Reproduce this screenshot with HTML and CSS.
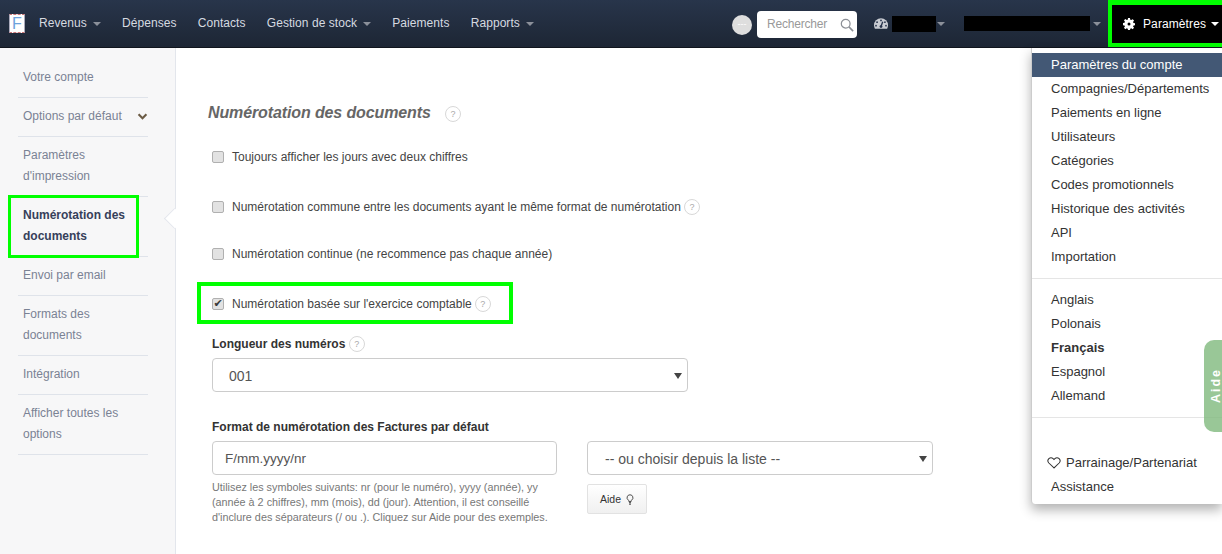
FILE: index.html
```html
<!DOCTYPE html>
<html lang="fr">
<head>
<meta charset="utf-8">
<title>Numérotation des documents</title>
<link rel="stylesheet" href="styles.css">
</head>
<body>
<header class="nav">
  <div class="logo"><span>F</span></div>
  <nav class="nav-main">
    <a class="nav-link has-caret">Revenus</a>
    <a class="nav-link">Dépenses</a>
    <a class="nav-link">Contacts</a>
    <a class="nav-link has-caret">Gestion de stock</a>
    <a class="nav-link">Paiements</a>
    <a class="nav-link has-caret">Rapports</a>
  </nav>
  <div class="nav-right">
    <div class="avatar">---</div>
    <div class="search">
      <span>Rechercher</span>
      <svg viewBox="0 0 16 16" width="14" height="14"><circle cx="6.5" cy="6.5" r="5" fill="none" stroke="#8b8f96" stroke-width="1.4"/><path d="M10.2 10.2 15 15" stroke="#8b8f96" stroke-width="1.8"/></svg>
    </div>
    <div class="dash">
      <svg viewBox="0 0 16 12" width="14" height="11"><path d="M8 0a8 8 0 0 0-8 8c0 1.500.4 2.800 1 4h14c.6-1.200 1-2.500 1-4a8 8 0 0 0-8-8z" fill="#c9ccd2"/><circle cx="8" cy="2.500" r="1" fill="#27334a"/><circle cx="3.500" cy="4.500" r="1" fill="#27334a"/><circle cx="12.500" cy="4.500" r="1" fill="#27334a"/><circle cx="2.300" cy="8.500" r="1" fill="#27334a"/><circle cx="13.700" cy="8.500" r="1" fill="#27334a"/><path d="M8 9.500 10 4" stroke="#27334a" stroke-width="1.500"/><circle cx="8" cy="9.500" r="1.600" fill="#27334a"/></svg>
      <span class="redact redact-a"></span>
      <i class="caret"></i>
    </div>
    <div class="account">
      <span class="redact redact-b"></span>
      <i class="caret"></i>
    </div>
    <div class="settings">
      <svg viewBox="0 0 16 16" width="12" height="12"><path fill="#fff" fill-rule="evenodd" d="M6.700 0h2.600l.4 2.200 1.300.6 1.900-1.300 1.800 1.800-1.300 1.900.6 1.300 2 .4v2.600l-2 .4-.6 1.300 1.300 1.900-1.800 1.800-1.900-1.300-1.300.6-.4 2H6.700l-.4-2-1.300-.6-1.900 1.300-1.800-1.800 1.300-1.900-.6-1.300-2-.4V6.700l2-.4.6-1.300-1.300-1.900 1.800-1.800L5 2.800l1.300-.6zM8 6a2 2 0 1 0 0 4 2 2 0 0 0 0-4z"/></svg>
      <span>Paramètres</span>
      <i class="caret caret-white"></i>
    </div>
  </div>
</header>

<div class="page">
  <aside class="side">
    <ul class="side-list">
      <li class="side-item">Votre compte</li>
      <li class="side-item side-toggle">Options par défaut
        <svg viewBox="0 0 12 8" width="11" height="7"><path d="M1.500 1.500 6 6l4.500-4.500" fill="none" stroke="#6b5b45" stroke-width="2.400"/></svg>
      </li>
      <li class="side-item">Paramètres d'impression</li>
      <li class="side-item side-active">Numérotation des documents</li>
      <li class="side-item">Envoi par email</li>
      <li class="side-item">Formats des documents</li>
      <li class="side-item">Intégration</li>
      <li class="side-item">Afficher toutes les options</li>
    </ul>
  </aside>

  <main class="content">
    <h2 class="title">Numérotation des documents <span class="hint hint-title">?</span></h2>

    <label class="check-row row-a"><input type="checkbox"><span>Toujours afficher les jours avec deux chiffres</span></label>
    <label class="check-row row-b"><input type="checkbox"><span>Numérotation commune entre les documents ayant le même format de numérotation</span><span class="hint">?</span></label>
    <label class="check-row row-c"><input type="checkbox"><span>Numérotation continue (ne recommence pas chaque année)</span></label>
    <label class="check-row row-d highlighted"><input type="checkbox" checked><span>Numérotation basée sur l'exercice comptable</span><span class="hint">?</span></label>

    <div class="field-label label-a">Longueur des numéros <span class="hint">?</span></div>
    <div class="select select-wide">001</div>

    <div class="field-label label-b">Format de numérotation des Factures par défaut</div>
    <div class="format-grid">
      <div>
        <div class="input">F/mm.yyyy/nr</div>
        <p class="help">Utilisez les symboles suivants: nr (pour le numéro), yyyy (année), yy (année à 2 chiffres), mm (mois), dd (jour). Attention, il est conseillé d'inclure des séparateurs (/ ou .). Cliquez sur Aide pour des exemples.</p>
      </div>
      <div>
        <div class="select">-- ou choisir depuis la liste --</div>
        <button class="btn">Aide
          <svg viewBox="0 0 10 14" width="8" height="11"><path d="M5 1a3.700 3.700 0 0 0-2.200 6.700c.5.400.7 1 .7 1.800h3c0-.8.200-1.400.7-1.800A3.700 3.700 0 0 0 5 1z" fill="none" stroke="#333" stroke-width="1.100"/><path d="M3.700 11h2.600M4 13h2" stroke="#333" stroke-width="1.300"/></svg>
        </button>
      </div>
    </div>
  </main>
</div>

<div class="menu">
  <ul class="menu-group">
    <li class="menu-item menu-current">Paramètres du compte</li>
    <li class="menu-item">Compagnies/Départements</li>
    <li class="menu-item">Paiements en ligne</li>
    <li class="menu-item">Utilisateurs</li>
    <li class="menu-item">Catégories</li>
    <li class="menu-item">Codes promotionnels</li>
    <li class="menu-item">Historique des activités</li>
    <li class="menu-item">API</li>
    <li class="menu-item">Importation</li>
  </ul>
  <ul class="menu-group">
    <li class="menu-item">Anglais</li>
    <li class="menu-item">Polonais</li>
    <li class="menu-item menu-bold">Français</li>
    <li class="menu-item">Espagnol</li>
    <li class="menu-item">Allemand</li>
  </ul>
  <ul class="menu-group menu-last">
    <li class="menu-item menu-heart">
      <svg viewBox="0 0 16 14" width="14" height="12"><path d="M8 12.800 2 7a3.600 3.600 0 0 1 0-5 3.600 3.600 0 0 1 5 0l1 1 1-1a3.600 3.600 0 0 1 5 0 3.600 3.600 0 0 1 0 5z" fill="none" stroke="#333" stroke-width="1.200"/></svg>
      Parrainage/Partenariat
    </li>
    <li class="menu-item">Assistance</li>
  </ul>
</div>

<div class="help-tab"><span>Aide</span></div>
</body>
</html>
```

FILE: styles.css
```css
*, *::before, *::after { box-sizing: border-box; }
html, body { margin: 0; height: 554px; overflow: hidden; }
body { font: 12px/21px "Liberation Sans", Arial, sans-serif; color: #333; background: #fff; position: relative; }
ul { list-style: none; margin: 0; padding: 0; }

.nav { height: 48px; display: flex; align-items: center; background: linear-gradient(#28354b, #1d2634); border-bottom: 1px solid #10151d; }
.logo { width: 16px; height: 19px; margin: 0 0 0 9px; background: #fff; border: 1px solid #aab; border-top: 1px dashed #c77; border-bottom: 1px dashed #c77; display: flex; align-items: center; justify-content: center; color: #6ea2dc; font-size: 16px; line-height: 17px; }
.nav-main { display: flex; margin-left: 14px; gap: 21.300px; }
.nav-link { color: #d6dae0; letter-spacing: .05px; display: flex; align-items: center; }
.nav-link.has-caret::after { content: ""; margin-left: 6px; border: 4px solid transparent; border-top-color: #8b909a; border-bottom: 0; width: 8px; }
.nav-right { margin-left: auto; display: flex; align-items: center; height: 47px; }
.avatar { width: 20px; height: 20px; margin-top: 2px; border-radius: 50%; background: #dedede; color: #fff; font-size: 9px; line-height: 19px; text-align: center; }
.search { width: 100px; height: 27px; margin: 2px 0 0 5px; background: #fff; border-radius: 4px; display: flex; align-items: center; justify-content: space-between; padding: 0 3px 0 10px; color: #999; letter-spacing: -.2px; }
.dash { display: flex; align-items: center; margin-left: 17px; }
.redact { display: block; background: #000; height: 16px; }
.redact-a { width: 44px; margin-left: 4px; }
.redact-b { width: 126px; height: 15px; }
.caret { border: 4px solid transparent; border-top-color: #8b909a; border-bottom: 0; width: 8px; margin-left: 1px; }
.account { display: flex; align-items: center; margin-left: 19px; }
.account .caret { margin-left: 3px; }
.settings { display: flex; align-items: center; width: 114px; height: 47px; margin-left: 7px; background: #000; border: 4px solid #00ff00; border-top-width: 5px; border-right: 0; color: #fff; padding-left: 11px; }
.settings span { margin-left: 8px; letter-spacing: .1px; }
.caret-white { border-top-color: #fff; margin-left: 5px; }

.page { display: flex; height: 506px; }
.side { width: 176px; background: #f7f7f8; border-right: 1px solid #e3e6ec; padding: 11px 0 0 18px; flex: none; }
.side-list { width: 130px; }
.side-item { position: relative; padding: 8px 15px 9px 5px; border-bottom: 1px solid #dfe3ea; color: #7a8294; }
.side-toggle { display: flex; justify-content: space-between; align-items: center; padding-right: 0; white-space: nowrap; }
.side-active { color: #36405a; font-weight: bold; }
.side-active::before { content: ""; position: absolute; left: -10px; right: 9px; top: -2px; bottom: -2px; border: 3px solid #00ff00; }
.side-active::after { content: ""; position: absolute; left: 149px; top: 14px; width: 15px; height: 15px; background: #fff; border: 1px solid #e3e6ec; border-width: 0 0 1px 1px; transform: rotate(45deg); }

.content { flex: 1; padding: 55px 0 0 32px; position: relative; }
.title { margin: 0; font-size: 16px; line-height: 20px; font-style: italic; font-weight: bold; color: #666; letter-spacing: -.12px; }
.hint { display: inline-block; width: 16px; height: 16px; border: 1px solid #d8d8d8; border-radius: 50%; font: 9px/14px "Liberation Sans", sans-serif; text-align: center; color: #aaa; vertical-align: 1px; letter-spacing: 0; }
.hint-title { margin-left: 10px; vertical-align: 1px; }
.check-row { display: flex; align-items: center; height: 20px; margin-left: 4px; color: #444; position: relative; }
.check-row input { margin: 0 8px 0 0; width: 12px; height: 12px; appearance: none; background: #e2e2e2; border: 1px solid #b0b0b0; border-radius: 2px; position: relative; }
.check-row input:checked::after { content: "✔"; position: absolute; left: 0; top: 0; width: 10px; height: 10px; font: 11px/10px "DejaVu Sans", sans-serif; color: #3a3a3a; text-align: center; }
.check-row .hint { margin-left: 3px; }
.row-a { margin-top: 24px; }
.row-b { margin-top: 30px; }
.row-c { margin-top: 27px; }
.row-d { margin-top: 30px; }
.highlighted::before { content: ""; position: absolute; left: -15px; top: -12px; width: 316px; height: 42px; border: 4px solid #00ff00; }
.field-label { margin-left: 4px; font-weight: bold; color: #333; }
.label-a { margin-top: 20px; }
.label-b { margin-top: 25px; }
.select, .input { height: 34px; border: 1px solid #ccc; border-radius: 4px; padding: 0 17px; line-height: 34px; font-size: 14px; color: #555; position: relative; background: #fff; }
.select::after { content: ""; position: absolute; right: 5px; top: 14px; border: 4px solid transparent; border-top: 6px solid #444; border-bottom: 0; }
.select-wide { width: 476px; margin: 3px 0 0 4px; padding-left: 16px; }
.format-grid { display: grid; grid-template-columns: 345px 346px; gap: 30px; margin: 3px 0 0 4px; }
.input { padding-left: 12px; font-size: 13.500px; line-height: 33px; }
.help { margin: 5px 0 0; font-size: 10.800px; line-height: 15px; color: #777; }
.btn { margin-top: 9px; width: 60px; height: 30px; border: 1px solid #e2e2e2; border-radius: 2px; background: linear-gradient(#fff, #f0f0f0); font: 10.500px "Liberation Sans", sans-serif; color: #333; display: flex; align-items: center; justify-content: center; gap: 5px; padding: 0; }

.menu { position: absolute; left: 1031px; top: 48px; width: 191px; height: 456px; background: #fff; border-radius: 0 0 0 4px; padding-top: 5px; box-shadow: 0 6px 12px rgba(0,0,0,.3); border-left: 1px solid #ccc; font-size: 13px; }
.menu-group { padding-bottom: 9px; border-bottom: 1px solid #e5e5e5; margin-bottom: 9px; }
.menu-last { border: 0; padding: 24px 0 0; margin: 0; }
.menu-item { height: 24px; line-height: 24px; padding-left: 19px; color: #333; white-space: nowrap; }
.menu-current { background: #435875; color: #fff; }
.menu-bold { font-weight: bold; }
.menu-heart { padding-left: 15px; display: flex; align-items: center; gap: 5px; }

.help-tab { position: absolute; left: 1204px; top: 340px; width: 18px; height: 92px; background: rgba(128,185,125,.8); border-radius: 10px 0 0 10px; display: flex; align-items: center; justify-content: center; }
.help-tab span { transform: translate(4px, -1px) rotate(-90deg); color: #fff; font-weight: bold; font-size: 12.500px; line-height: 13px; letter-spacing: 2px; white-space: nowrap; display: block; }
```
